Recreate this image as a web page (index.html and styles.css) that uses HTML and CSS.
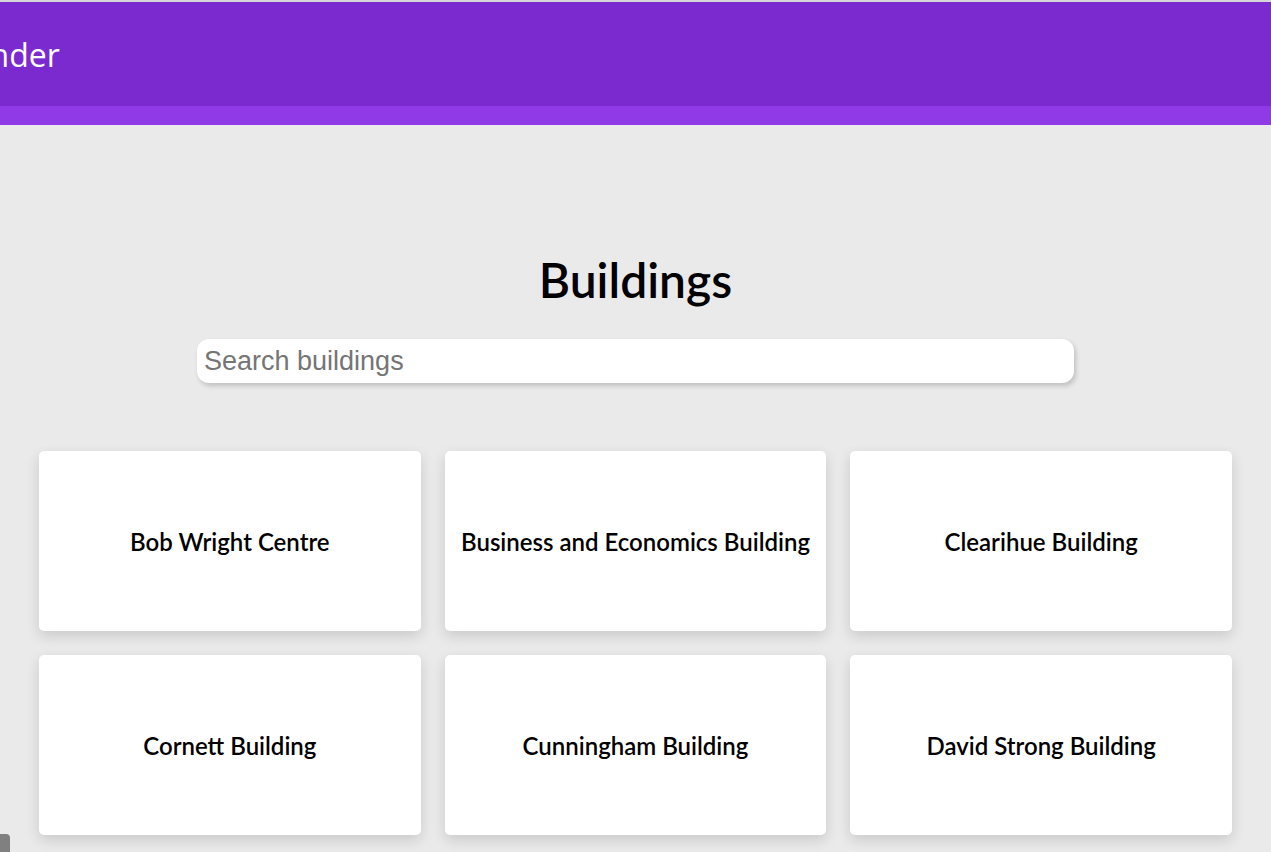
FILE: index.html
```html
<!DOCTYPE html>
<html lang="en">
<head>
<meta charset="utf-8">
<title>Buildings</title>
<link rel="stylesheet" href="styles.css">
</head>
<body>
<header class="topbar">
  <div class="topbar-main">
    <span class="brand">Finder</span>
  </div>
  <div class="topbar-strip"></div>
</header>
<main class="content">
  <h1 class="title">Buildings</h1>
  <div class="search-wrap">
    <input class="search" type="text" placeholder="Search buildings">
  </div>
  <section class="grid">
    <div class="card">Bob Wright Centre</div>
    <div class="card">Business and Economics Building</div>
    <div class="card">Clearihue Building</div>
    <div class="card">Cornett Building</div>
    <div class="card">Cunningham Building</div>
    <div class="card">David Strong Building</div>
  </section>
</main>
<div class="corner-tab"></div>
</body>
</html>
```
FILE: styles.css
```css
* { box-sizing: border-box; }
html, body {
  margin: 0;
  padding: 0;
  height: 100%;
  overflow: hidden;
}
body {
  background: #eaeaea;
  font-family: "Lato", "Liberation Sans", sans-serif;
  color: #000;
  border-top: 2px solid #d6d6d6;
}
.topbar-main {
  height: 104px;
  background: #7b2ad0;
  display: flex;
  align-items: center;
  overflow: hidden;
}
.brand {
  font-family: "Open Sans", "Noto Sans", sans-serif;
  font-size: 32px;
  color: #fff;
  margin-left: -35px;
  white-space: nowrap;
}
.topbar-strip {
  height: 19px;
  background: #8f3ae6;
}
.content {
  padding: 126px 39px 0;
  display: flex;
  flex-direction: column;
  align-items: center;
}
.title {
  margin: 0;
  font-size: 48px;
  font-weight: 600;
  line-height: 58px;
}
.search-wrap {
  margin-top: 30px;
  width: 877px;
}
.search {
  width: 100%;
  height: 44px;
  border: none;
  outline: none;
  border-radius: 12px;
  background: #fff;
  padding: 0 7px;
  font-family: "Liberation Sans", Arial, sans-serif;
  font-size: 27px;
  color: #333;
  box-shadow: 2px 3px 5px rgba(0, 0, 0, 0.18);
}
.search::placeholder { color: #757575; }
.grid {
  margin-top: 68px;
  width: 100%;
  display: grid;
  grid-template-columns: repeat(3, 1fr);
  gap: 24px;
}
.card {
  height: 180px;
  background: #fff;
  border-radius: 5px;
  box-shadow: 0 5px 14px rgba(0, 0, 0, 0.14);
  display: flex;
  align-items: center;
  justify-content: center;
  text-align: center;
  font-size: 24px;
  font-weight: 600;
}
.corner-tab {
  position: fixed;
  left: 0;
  bottom: 0;
  width: 10px;
  height: 18px;
  background: #808080;
  border-top-right-radius: 4px;
}
```
